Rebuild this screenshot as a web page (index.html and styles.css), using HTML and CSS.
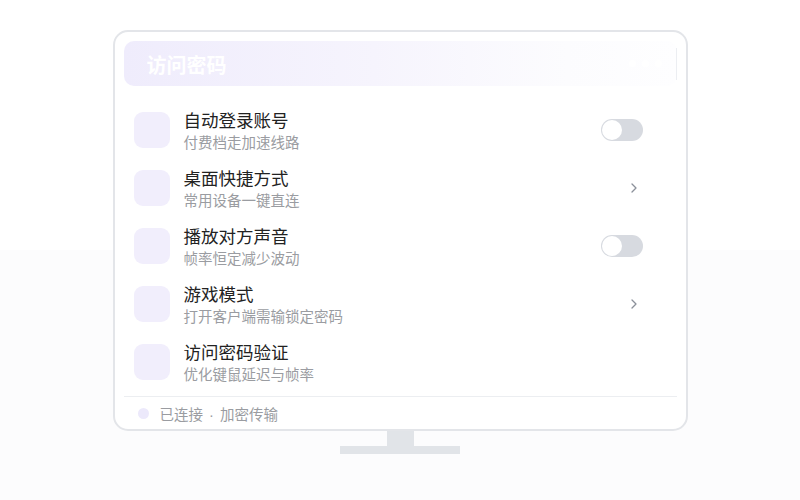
FILE: index.html
```html
<!DOCTYPE html>
<html lang="zh-CN">
<head>
<meta charset="utf-8">
<link rel="stylesheet" href="styles.css">
</head>
<body>
<div class="stage">
  <div class="monitor">
    <div class="screen">
      <div class="header">
        <span class="header-title">访问密码</span>
        <span class="header-dots"><i></i><i></i><i></i></span>
        <span class="header-sep"></span>
      </div>
      <div class="list">
        <div class="row">
          <div class="icon"></div>
          <div class="text"><div class="title">自动登录账号</div><div class="sub">付费档走加速线路</div></div>
          <div class="toggle"><span class="knob"></span></div>
        </div>
        <div class="row">
          <div class="icon"></div>
          <div class="text"><div class="title">桌面快捷方式</div><div class="sub">常用设备一键直连</div></div>
          <svg class="chev" width="6" height="10" viewBox="0 0 6 10"><polyline points="1,1 5,5 1,9" fill="none" stroke="#8b909a" stroke-width="1.3" stroke-linecap="round" stroke-linejoin="round"/></svg>
        </div>
        <div class="row">
          <div class="icon"></div>
          <div class="text"><div class="title">播放对方声音</div><div class="sub">帧率恒定减少波动</div></div>
          <div class="toggle"><span class="knob"></span></div>
        </div>
        <div class="row">
          <div class="icon"></div>
          <div class="text"><div class="title">游戏模式</div><div class="sub">打开客户端需输锁定密码</div></div>
          <svg class="chev" width="6" height="10" viewBox="0 0 6 10"><polyline points="1,1 5,5 1,9" fill="none" stroke="#8b909a" stroke-width="1.3" stroke-linecap="round" stroke-linejoin="round"/></svg>
        </div>
        <div class="row">
          <div class="icon"></div>
          <div class="text"><div class="title">访问密码验证</div><div class="sub">优化键鼠延迟与帧率</div></div>
        </div>
      </div>
      <div class="footer">
        <span class="dot"></span>
        <span class="footer-text">已连接<span class="mid"> · </span>加密传输</span>
      </div>
    </div>
  </div>
  <div class="neck"></div>
  <div class="base"></div>
</div>
</body>
</html>
```

FILE: styles.css
```css
* { box-sizing: border-box; }
html, body { margin: 0; padding: 0; }
body {
  width: 800px;
  height: 500px;
  overflow: hidden;
  background: linear-gradient(180deg, #ffffff 0, #ffffff 250px, #fcfcfd 250px, #fcfcfd 100%);
  font-family: "Noto Sans CJK SC", "Noto Sans", sans-serif;
}
.stage {
  display: flex;
  flex-direction: column;
  align-items: center;
  padding-top: 30px;
}
.monitor {
  width: 575px;
  height: 401px;
  border: 2px solid #e3e5e9;
  border-radius: 15px;
  background: #ffffff;
  padding: 9px;
}
.screen {
  display: flex;
  flex-direction: column;
}
.header {
  height: 45px;
  border-radius: 10px;
  background: linear-gradient(90deg, #efecfc 0%, #f6f4fd 45%, #fcfcfe 80%, #fefeff 100%);
  display: flex;
  align-items: center;
  padding-left: 23px;
}
.header-title {
  color: #ffffff;
  font-size: 20px;
  font-weight: 700;
  flex: 1;
  margin-top: 2px;
}
.header-dots {
  display: flex;
  gap: 6px;
  margin-right: 14px;
}
.header-dots i {
  display: block;
  width: 7px;
  height: 7px;
  border-radius: 50%;
  background: #ffffff;
}
.header-sep {
  width: 1px;
  height: 32px;
  background: #eceef2;
}
.list {
  margin-top: 15px;
  display: flex;
  flex-direction: column;
}
.row {
  height: 58px;
  display: flex;
  align-items: center;
  padding-left: 10px;
  padding-right: 34px;
}
.icon {
  width: 36px;
  height: 36px;
  border-radius: 9px;
  background: #f1eefc;
  flex: none;
}
.text {
  flex: 1;
  margin-left: 14px;
  margin-top: 1px;
}
.title {
  font-size: 17.5px;
  line-height: 22px;
  color: #222222;
}
.sub {
  font-size: 14.5px;
  line-height: 20px;
  margin-top: 1px;
  color: #9a9ca1;
}
.toggle {
  width: 42px;
  height: 22px;
  border-radius: 11px;
  background: #d7dae0;
  padding: 1px;
  display: flex;
}
.knob {
  width: 20px;
  height: 20px;
  border-radius: 50%;
  background: #ffffff;
}
.chev {
  margin-right: 6px;
}
.footer {
  margin-top: 5px;
  border-top: 1px solid #eceef1;
  height: 33px;
  display: flex;
  align-items: center;
  padding-left: 14px;
}
.dot {
  width: 11px;
  height: 11px;
  border-radius: 50%;
  background: #ece9fb;
}
.footer-text {
  margin-left: 11px;
  font-size: 14.5px;
  color: #9a9ca1;
}
.mid {
  font-family: "Liberation Sans", sans-serif;
  margin: 0 2px;
}
.neck {
  width: 27px;
  height: 15px;
  background: #e1e4e8;
}
.base {
  width: 120px;
  height: 8px;
  background: #e1e4e8;
}
```
